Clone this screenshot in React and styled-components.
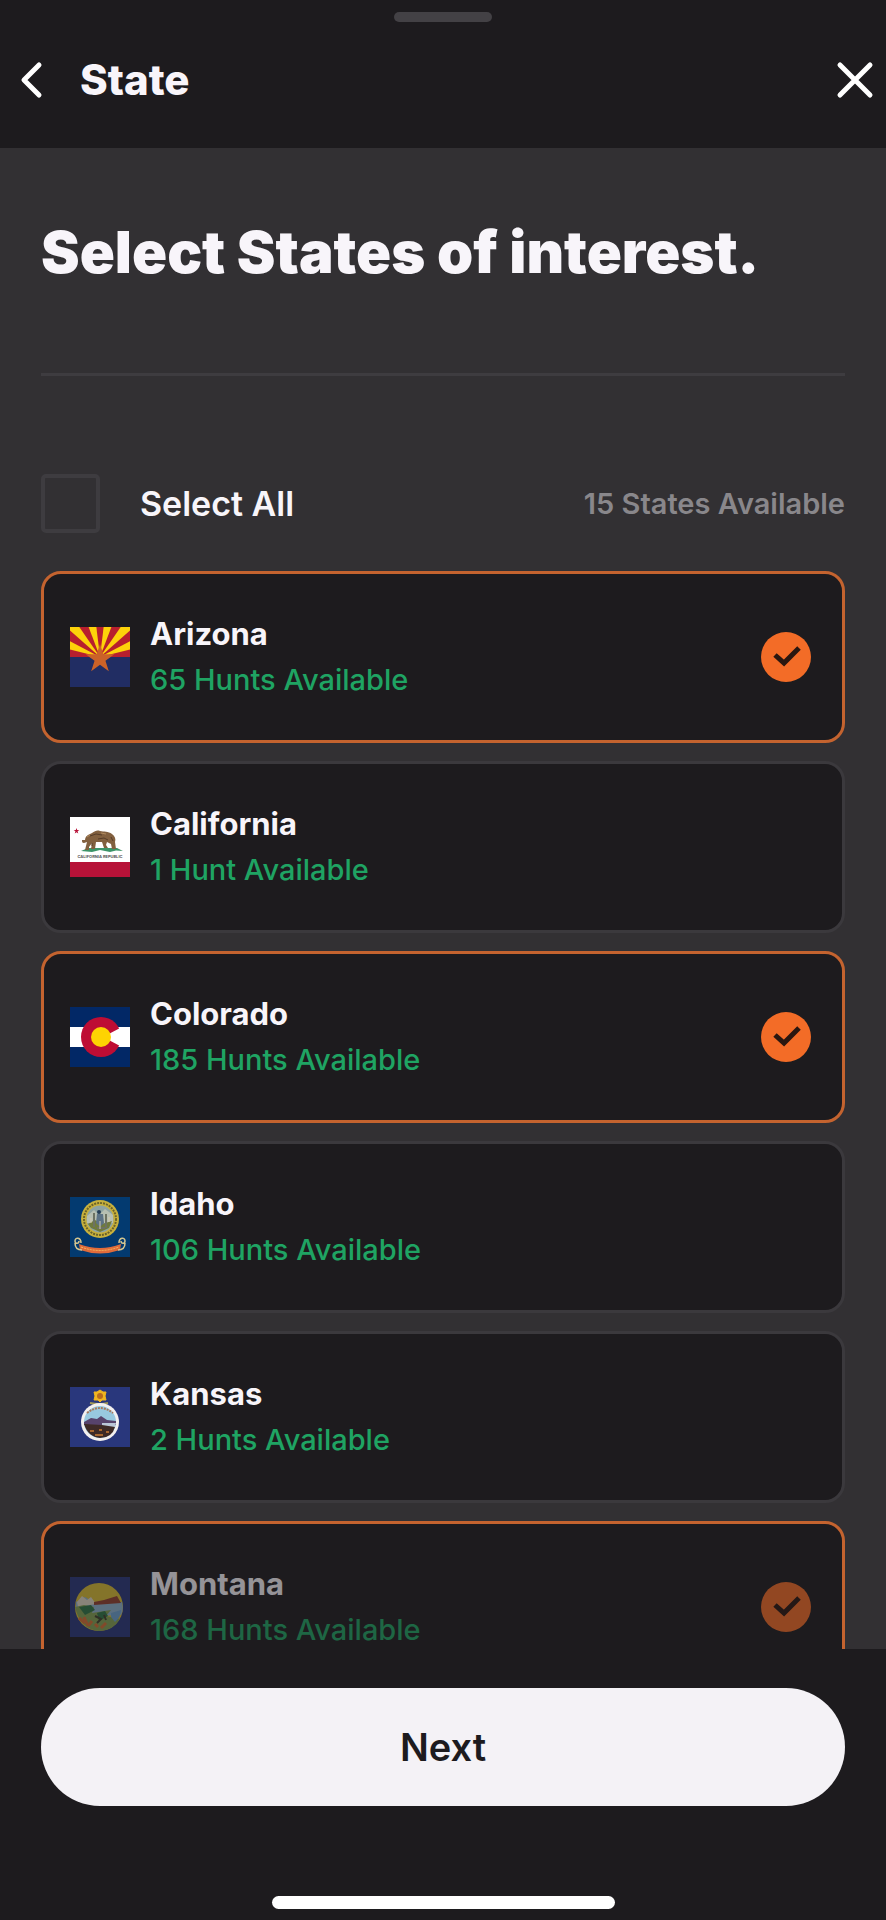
import { useState } from 'react';
import styled, { createGlobalStyle } from 'styled-components';

const GlobalStyle = createGlobalStyle`
  *, *::before, *::after {
    box-sizing: border-box;
  }

  body {
    margin: 0;
    background-color: #1d1b1e;
    color: #f8f5fa;
    font-family: Inter, "Liberation Sans", sans-serif;
  }

  h1, h2, p, ul {
    margin: 0;
    padding: 0;
  }

  button {
    font-family: inherit;
    cursor: pointer;
  }
`;

const Sheet = styled.div`
  height: 100vh;
  display: flex;
  flex-direction: column;
`;

const Header = styled.header`
  display: flex;
  flex-direction: column;
  align-items: center;
  padding-top: 12px;
`;

const Handle = styled.div`
  width: 98px;
  height: 10px;
  border-radius: 5px;
  background-color: #434145;
`;

const HeaderRow = styled.div`
  align-self: stretch;
  display: flex;
  align-items: center;
  gap: 28px;
  padding: 28px 10px 38px 12px;
`;

const HeaderTitle = styled.h2`
  flex: 1;
  font-size: 42px;
  line-height: 60px;
  font-weight: 800;
`;

const IconButton = styled.button`
  width: 40px;
  height: 60px;
  padding: 0;
  display: flex;
  align-items: center;
  justify-content: center;
  border: none;
  background: none;
  color: #fff;

  svg {
    width: 40px;
    height: 40px;
  }
`;

const Content = styled.main`
  flex: 1;
  min-height: 0;
  overflow-y: auto;
  scrollbar-width: none;
  padding: 64px 41px 0;
  background-color: #323033;
`;

const Title = styled.h1`
  font-size: 58px;
  line-height: 80px;
  font-weight: 900;
`;

const Divider = styled.hr`
  height: 3px;
  margin: 81px 0 98px;
  border: none;
  background-color: #3e3c40;
`;

const ListHeader = styled.div`
  display: flex;
  align-items: center;
  justify-content: space-between;
  margin-bottom: 38px;
`;

const SelectAll = styled.label`
  display: flex;
  align-items: center;
  gap: 40px;
  font-size: 34px;
  font-weight: 600;
  cursor: pointer;
`;

const Checkbox = styled.input`
  appearance: none;
  width: 59px;
  height: 59px;
  margin: 0;
  border: 4px solid #3e3c40;
  border-radius: 5px;
  cursor: pointer;

  &:checked {
    background-color: #f36c27;
  }
`;

const Count = styled.p`
  color: #89878b;
  font-size: 29px;
  font-weight: 600;
`;

const StateList = styled.ul`
  display: flex;
  flex-direction: column;
  gap: 18px;
  list-style: none;
`;

const StateCard = styled.label`
  display: flex;
  align-items: center;
  gap: 20px;
  height: 172px;
  padding: 0 31px 0 26px;
  border: 3px solid ${props => props.$selected ? '#c4632f' : '#3b393d'};
  border-radius: 20px;
  background-color: #1d1b1e;
  cursor: pointer;

  & > * {
    opacity: ${props => props.$faded ? 0.55 : 1};
  }
`;

const Flag = styled.svg`
  width: 60px;
  height: 60px;
  flex: none;
`;

const StateText = styled.div`
  flex: 1;
  line-height: 46px;
`;

const StateName = styled.p`
  font-size: 31px;
  font-weight: 700;
`;

const Hunts = styled.p`
  color: #1fa463;
  font-size: 29px;
  font-weight: 500;
`;

const Tick = styled.span`
  display: grid;
  width: 50px;
  height: 50px;

  input, svg {
    grid-area: 1 / 1;
    width: 50px;
    height: 50px;
  }

  input {
    appearance: none;
    margin: 0;
    border-radius: 50%;
    cursor: pointer;
  }

  input:checked {
    background-color: #f36c27;
  }

  svg {
    pointer-events: none;
  }
`;

const Footer = styled.footer`
  display: flex;
  flex-direction: column;
  align-items: center;
  gap: 90px;
  padding: 39px 41px 11px;
`;

const NextButton = styled.button`
  width: 100%;
  height: 118px;
  border: none;
  border-radius: 59px;
  background-color: #f4f2f6;
  color: #1d1b1e;
  font-size: 38px;
  font-weight: 600;
`;

const HomeIndicator = styled.div`
  width: 343px;
  height: 13px;
  border-radius: 7px;
  background-color: #fff;
`;

// wedge of the upper half disc, angles in degrees counted from the left
const ray = (index) => {
  const step = 180 / 13;
  const point = (angle) => {
    const rad = (angle * Math.PI) / 180;
    return `${30 - 60 * Math.cos(rad)},${30 - 60 * Math.sin(rad)}`;
  };
  return `30,30 ${point(index * step)} ${point((index + 1) * step)}`;
};

const star = (cx, cy, r) => (
  Array.from({ length: 10 }, (_, i) => {
    const radius = i % 2 ? r * 0.382 : r;
    const rad = (i * 36 - 90) * Math.PI / 180;
    return `${cx + radius * Math.cos(rad)},${cy + radius * Math.sin(rad)}`;
  }).join(' ')
);

const ArizonaFlag = () => (
  <Flag viewBox="0 0 60 60" aria-hidden="true">
    <rect width="60" height="30" fill="#b71f2e" />
    {[1, 3, 5, 7, 9, 11].map(i => <polygon key={i} points={ray(i)} fill="#fdd20a" />)}
    <rect y="30" width="60" height="30" fill="#212d63" />
    <polygon points={star(30, 32, 15)} fill="#cb6228" />
  </Flag>
);

const CaliforniaFlag = () => (
  <Flag viewBox="0 0 60 60" aria-hidden="true">
    <rect width="60" height="60" fill="#fff" />
    <rect y="45" width="60" height="15" fill="#b71238" />
    <polygon points={star(6.5, 14, 3)} fill="#b71238" />
    <path d="M11 34 18 31 47 31 53 34 46 33.500 40 35 30 33 22 35Z" fill="#3c9468" />
    <path d="M15 23c0-3 2-5 5-6l2-1c3-2 5-3 8-2 4 1 8 0 12 3 3 2 4 5 3 8l1 7h-4l-1-5-4-2-1 3 2 3h-4l-2-6-6 0-1 7h-4l1-6-3 4v3h-4l2-8-3 1c-2 0-2-1-2-3z" fill="#82603f" />
    <path d="M20 19l6-2 6 1M28 22l6-1 4 2M41 20l2 4M22 26v3" stroke="#563d29" strokeWidth="1" fill="none" />
    <path d="M17 20l3-2M31 16l5 1" stroke="#b18a5e" strokeWidth="1" fill="none" />
    <text x="30" y="41" textAnchor="middle" fontSize="4" fontWeight="700" fill="#555">CALIFORNIA REPUBLIC</text>
  </Flag>
);

const ColoradoFlag = () => (
  <Flag viewBox="0 0 60 60" aria-hidden="true">
    <rect width="60" height="60" fill="#022866" />
    <rect y="20" width="60" height="20" fill="#fff" />
    <circle cx="31" cy="30" r="20" fill="#be0d34" />
    <path d="M33 30 52 20V40Z" fill="#fff" />
    <circle cx="31" cy="30" r="10" fill="#fed302" />
  </Flag>
);

const IdahoFlag = () => (
  <Flag viewBox="0 0 60 60" aria-hidden="true">
    <rect width="60" height="60" fill="#033a70" />
    <circle cx="30" cy="22" r="19" fill="#c8b13c" />
    <circle cx="30" cy="22" r="16" fill="none" stroke="#6c642a" strokeWidth="2" strokeDasharray="2 1" />
    <circle cx="30" cy="22" r="13.500" fill="#8fa4a2" />
    <path d="M17 19 24 13 29 18 35 12 43 18 43 26 17 26Z" fill="#b7bfb2" />
    <path d="M18 27 25 23 32 27 42 24 39 31 30 35 21 31Z" fill="#6f7a3d" />
    <path d="M24 16v14M36 17v14M27 31h8" stroke="#6d7262" strokeWidth="2" />
    <path d="M27 17h6l1 9-4 4-4-4z" fill="#5d7386" />
    <circle cx="29" cy="15" r="2" fill="#253e57" />
    <path d="M30 24v8M21 21v5M39 20v5" stroke="#d8ccb0" strokeWidth="1" />
    <path d="M9 47Q30 55 51 47L50 53Q30 60 10 53Z" fill="#df6b3b" />
    <path d="M11 50Q30 57 49 50" fill="none" stroke="#f2bd62" strokeWidth="1" strokeDasharray="2 1" />
    <path d="M11 46c0-6-6-6-6-2 0 3 4 3 4 0M5 46c0 4 2 7 7 7M49 46c0-6 6-6 6-2 0 3-4 3-4 0M55 46c0 4-2 7-7 7" fill="none" stroke="#d4c690" strokeWidth="1.500" />
  </Flag>
);

const KansasFlag = () => (
  <Flag viewBox="0 0 60 60" aria-hidden="true">
    <rect width="60" height="60" fill="#29377c" />
    <path d="M20 16Q30 18 38 16" fill="none" stroke="#a49a55" strokeWidth="2" />
    <path d="M24 5l3 0 3-2 3 2 3 0-1 4 1 4-4 0-2 2-2-2-4 0 1-4z" fill="#f0b51f" stroke="#f0b51f" strokeWidth="1" />
    <circle cx="30" cy="9" r="3" fill="#b86b1e" />
    <circle cx="30" cy="35" r="19" fill="#f3f0ef" />
    <circle cx="30" cy="35" r="16" fill="#98c9df" />
    <path d="M17 26Q30 16 43 26" fill="none" stroke="#a8785b" strokeWidth="2" strokeDasharray="2 1" />
    <path d="M14 35 21 31 27 32 31 29 37 33 46 34V38H14Z" fill="#57436b" />
    <path d="M32 36h14l-1 4H32z" fill="#bac6d6" />
    <path d="M14 37 32 38 45 40Q42 51 30 51 18 50 14 37Z" fill="#3e2a25" />
    <path d="M20 44h4M29 43h3M36 45h3M25 48h8" stroke="#a8672f" strokeWidth="2" />
  </Flag>
);

const MontanaFlag = () => (
  <Flag viewBox="0 0 60 60" aria-hidden="true">
    <rect width="60" height="60" fill="#29377c" />
    <circle cx="29" cy="30" r="24" fill="#d9bd34" />
    <path d="M6 25 15 20 25 26 52 25Q54 33 51 38L28 39 6 33Z" fill="#8fb4cf" />
    <path d="M7 25 12 19 17 23 21 20 26 27 8 30Z" fill="#e0d9c4" />
    <path d="M24 25 34 23 47 19 51 26 24 28Z" fill="#92402f" />
    <path d="M5 30 14 28 24 30 22 36 41 33 36 39 50 42Q43 54 29 54 10 52 5 30Z" fill="#83a354" />
    <path d="M9 30l12-2 4 5-10 5zM27 36l8-2 3 5-9 5z" fill="#2f7746" />
    <path d="M41 36l10-3q0 7-6 12l-4-5z" fill="#6ca2d1" />
    <path d="M9 41l6 5M14 40l4 9M22 44l-4 5M25 47l3 3M36 46l-5 5" stroke="#d76f35" strokeWidth="3" />
    <path d="M25 39l6 3-4 4M34 38l2 5" fill="none" stroke="#41402c" strokeWidth="2" />
  </Flag>
);

const states = [
  { name: 'Arizona', hunts: 65, FlagIcon: ArizonaFlag },
  { name: 'California', hunts: 1, FlagIcon: CaliforniaFlag },
  { name: 'Colorado', hunts: 185, FlagIcon: ColoradoFlag },
  { name: 'Idaho', hunts: 106, FlagIcon: IdahoFlag },
  { name: 'Kansas', hunts: 2, FlagIcon: KansasFlag },
  { name: 'Montana', hunts: 168, FlagIcon: MontanaFlag, faded: true },
];

const StateItem = ({ name, hunts, FlagIcon, faded, selected, onToggle }) => (
  <li>
    <StateCard $selected={selected} $faded={faded}>
      <FlagIcon />
      <StateText>
        <StateName>{name}</StateName>
        <Hunts>{hunts} {hunts === 1 ? 'Hunt' : 'Hunts'} Available</Hunts>
      </StateText>
      <Tick>
        <input type="checkbox" checked={selected} onChange={onToggle} />
        {selected && (
          <svg viewBox="0 0 50 50" fill="none" aria-hidden="true">
            <path d="M14 23L23 31L38 16" stroke="#2a1710" strokeWidth="5" />
          </svg>
        )}
      </Tick>
    </StateCard>
  </li>
);

const App = () => {
  const [selected, setSelected] = useState(['Arizona', 'Colorado', 'Montana']);
  const allSelected = selected.length === states.length;

  const toggle = (name) => setSelected(
    selected.includes(name) ? selected.filter(item => item !== name) : [...selected, name]
  );
  const toggleAll = () => setSelected(allSelected ? [] : states.map(state => state.name));

  return (
    <>
      <GlobalStyle />
      <Sheet>
        <Header>
          <Handle />
          <HeaderRow>
            <IconButton aria-label="Back">
              <svg viewBox="0 0 40 40" fill="none" aria-hidden="true">
                <path d="M27 5L12 20L27 35" stroke="currentColor" strokeWidth="5" strokeLinecap="round" strokeLinejoin="round" />
              </svg>
            </IconButton>
            <HeaderTitle>State</HeaderTitle>
            <IconButton aria-label="Close">
              <svg viewBox="0 0 40 40" fill="none" aria-hidden="true">
                <path d="M4 5L34 35M34 5L4 35" stroke="currentColor" strokeWidth="5" strokeLinecap="round" />
              </svg>
            </IconButton>
          </HeaderRow>
        </Header>

        <Content>
          <Title>Select States of interest.</Title>
          <Divider />
          <ListHeader>
            <SelectAll>
              <Checkbox type="checkbox" checked={allSelected} onChange={toggleAll} />
              Select All
            </SelectAll>
            <Count>15 States Available</Count>
          </ListHeader>
          <StateList>
            {states.map(state => (
              <StateItem
                key={state.name}
                {...state}
                selected={selected.includes(state.name)}
                onToggle={() => toggle(state.name)}
              />
            ))}
          </StateList>
        </Content>

        <Footer>
          <NextButton>Next</NextButton>
          <HomeIndicator />
        </Footer>
      </Sheet>
    </>
  );
};

export default App;
